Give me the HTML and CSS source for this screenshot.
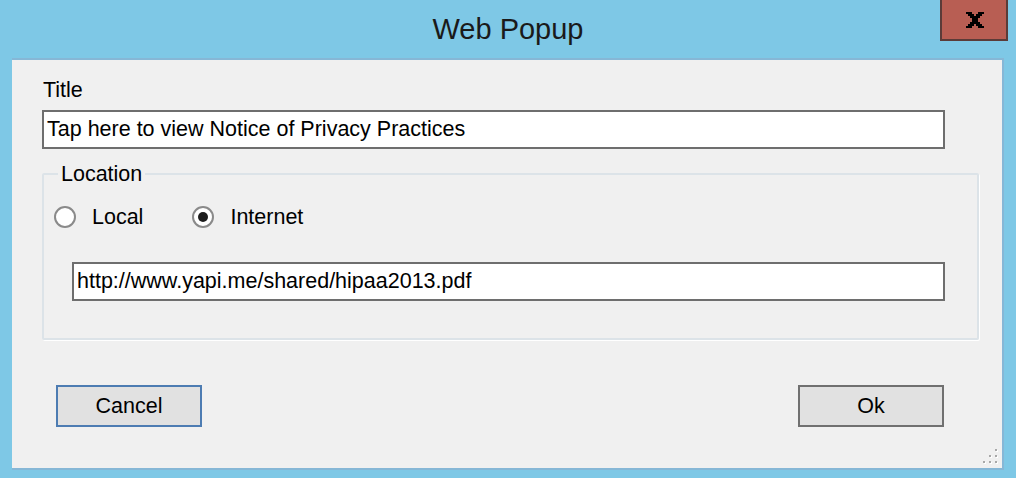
FILE: index.html
```html
<!DOCTYPE html>
<html>
<head>
<meta charset="utf-8">
<title>Web Popup</title>
<link rel="stylesheet" href="styles.css">
</head>
<body>
<div class="window">
  <div class="titlebar">
    <div></div>
    <div class="caption">Web Popup</div>
    <div class="close">
      <svg width="18" height="16" viewBox="0 0 18 16">
        <path d="M0 0h6v2h2v2h2v-2h2v-2h6v2h-2v2h-2v2h-2v4h2v2h2v2h2v2h-6v-2h-2v-2h-2v2h-2v2h-6v-2h2v-2h2v-2h2v-4h-2v-2h-2v-2h-2z" fill="#000"/>
      </svg>
    </div>
  </div>
  <div class="client">
    <div class="label">Title</div>
    <div class="textbox title-box">Tap here to view Notice of Privacy Practices</div>
    <fieldset class="group">
      <legend>Location</legend>
      <div class="radios">
        <div class="radio"><span class="dot"></span><span>Local</span></div>
        <div class="radio"><span class="dot checked"></span><span>Internet</span></div>
      </div>
      <div class="textbox url-box">http://www.yapi.me/shared/hipaa2013.pdf</div>
    </fieldset>
    <div class="buttons">
      <div class="btn default">Cancel</div>
      <div class="btn">Ok</div>
    </div>
    <svg class="grip" width="16" height="16" viewBox="0 0 16 16">
      <g fill="#fff"><rect x="14" y="2" width="2" height="2"/><rect x="8" y="8" width="2" height="2"/><rect x="14" y="8" width="2" height="2"/><rect x="2" y="14" width="2" height="2"/><rect x="8" y="14" width="2" height="2"/><rect x="14" y="14" width="2" height="2"/></g>
      <g fill="#a8a8a8"><rect x="13" y="1" width="2" height="2"/><rect x="7" y="7" width="2" height="2"/><rect x="13" y="7" width="2" height="2"/><rect x="1" y="13" width="2" height="2"/><rect x="7" y="13" width="2" height="2"/><rect x="13" y="13" width="2" height="2"/></g>
    </svg>
  </div>
</div>
</body>
</html>
```

FILE: styles.css
```css
html, body {
  margin: 0;
  padding: 0;
  background: #7ec8e6;
}
.window {
  width: 1016px;
  height: 478px;
  position: relative;
  font-family: "Liberation Sans", Arial, sans-serif;
  color: #000;
}
.titlebar {
  height: 58px;
  display: grid;
  grid-template-columns: 1fr auto 1fr;
  align-items: start;
}
.caption {
  font-size: 29px;
  line-height: 58px;
  color: #1a1a1a;
}
.close {
  justify-self: end;
  margin-right: 8px;
  width: 64px;
  height: 39px;
  background: #b85e53;
  border: 2px solid #5b3b38;
  border-top: none;
  display: flex;
  align-items: center;
  justify-content: center;
}
.close svg {
  margin-top: 1px;
  margin-left: 1px;
}
.client {
  margin-left: 12px;
  width: 992px;
  height: 412px;
  background: #f0f0f0;
  border-top: 2px solid #86b7d6;
  border-right: 2px solid #86b7d6;
  border-bottom: 2px solid #86b7d6;
  padding: 18px 0 0 30px;
  box-sizing: border-box;
  position: relative;
  font-size: 21.5px;
  line-height: 24px;
}
.client .label {
  padding-left: 1px;
}
.textbox {
  background: #fff;
  border: 2px solid #6e6e6e;
  box-sizing: border-box;
  height: 39px;
  line-height: 35px;
  padding-left: 3px;
  white-space: nowrap;
}
.title-box {
  margin-top: 8px;
  width: 903px;
}
.group {
  margin: 13px 0 0 0;
  width: 937px;
  box-sizing: border-box;
  border: 2px solid #dce3e8;
  border-radius: 2px;
  box-shadow: 1px 1px 0 #fff;
  padding: 19px 0 37px 10px;
  min-width: 0;
}
.group legend {
  margin-left: 4px;
  padding: 0 3px;
  line-height: 24px;
}
.radios {
  display: flex;
  align-items: center;
  height: 24px;
}
.radio {
  display: flex;
  align-items: center;
  gap: 16px;
  margin-right: 49px;
}
.dot {
  width: 22px;
  height: 22px;
  box-sizing: border-box;
  border-radius: 50%;
  border: 2px solid #8a8a8a;
  background: #fff;
  display: flex;
  align-items: center;
  justify-content: center;
}
.dot.checked::after {
  content: "";
  width: 10px;
  height: 10px;
  border-radius: 50%;
  background: #1c1c1c;
}
.url-box {
  margin: 33px 0 0 18px;
  width: 873px;
}
.buttons {
  display: flex;
  justify-content: space-between;
  width: 888px;
  margin: 45px 0 0 14px;
}
.btn {
  width: 146px;
  height: 42px;
  box-sizing: border-box;
  background: #e1e1e1;
  border: 2px solid #707070;
  text-align: center;
  line-height: 38px;
}
.btn.default {
  border-color: #4d7cb2;
}
.grip {
  position: absolute;
  right: 4px;
  bottom: 4px;
}
```
